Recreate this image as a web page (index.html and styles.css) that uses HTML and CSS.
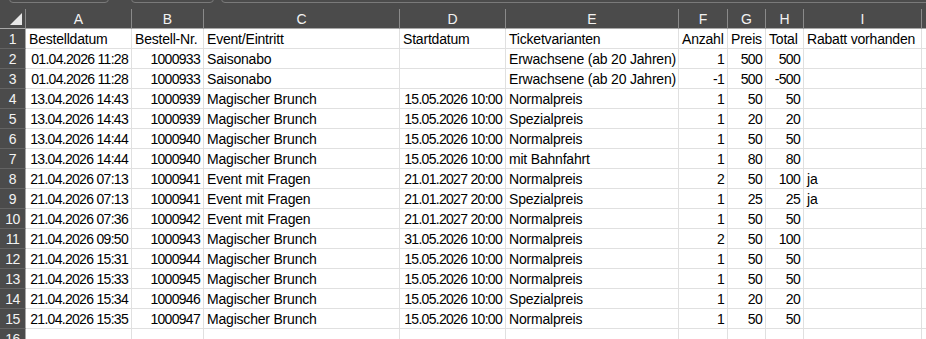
FILE: index.html
```html
<!DOCTYPE html>
<html lang="de">
<head>
<meta charset="utf-8">
<title>Bestellungen</title>
<link rel="stylesheet" href="styles.css">
</head>
<body>
<div class="app">
  <div class="topbar">
    <div class="box b1"></div>
    <div class="box b2"></div>
    <div class="box b3"></div>
  </div>
  <div class="sheet">
    <div class="row head">
      <div class="c corner"><svg width="25" height="19" viewBox="0 0 25 19"><polygon points="22,4 22,16 10,16" fill="#e8e8e8"/></svg></div>
      <div class="c">A</div><div class="c">B</div><div class="c">C</div><div class="c">D</div><div class="c">E</div><div class="c">F</div><div class="c">G</div><div class="c">H</div><div class="c">I</div><div class="c"></div>
    </div>
    <div class="row"><div class="c rh">1</div><div class="c">Bestelldatum</div><div class="c">Bestell-Nr.</div><div class="c">Event/Eintritt</div><div class="c">Startdatum</div><div class="c">Ticketvarianten</div><div class="c">Anzahl</div><div class="c">Preis</div><div class="c">Total</div><div class="c">Rabatt vorhanden</div><div class="c"></div></div>
    <div class="row"><div class="c rh">2</div><div class="c n">01.04.2026 11:28</div><div class="c n">1000933</div><div class="c">Saisonabo</div><div class="c"></div><div class="c">Erwachsene (ab 20 Jahren)</div><div class="c n">1</div><div class="c n">500</div><div class="c n">500</div><div class="c"></div><div class="c"></div></div>
    <div class="row"><div class="c rh">3</div><div class="c n">01.04.2026 11:28</div><div class="c n">1000933</div><div class="c">Saisonabo</div><div class="c"></div><div class="c">Erwachsene (ab 20 Jahren)</div><div class="c n">-1</div><div class="c n">500</div><div class="c n">-500</div><div class="c"></div><div class="c"></div></div>
    <div class="row"><div class="c rh">4</div><div class="c n">13.04.2026 14:43</div><div class="c n">1000939</div><div class="c">Magischer Brunch</div><div class="c n">15.05.2026 10:00</div><div class="c">Normalpreis</div><div class="c n">1</div><div class="c n">50</div><div class="c n">50</div><div class="c"></div><div class="c"></div></div>
    <div class="row"><div class="c rh">5</div><div class="c n">13.04.2026 14:43</div><div class="c n">1000939</div><div class="c">Magischer Brunch</div><div class="c n">15.05.2026 10:00</div><div class="c">Spezialpreis</div><div class="c n">1</div><div class="c n">20</div><div class="c n">20</div><div class="c"></div><div class="c"></div></div>
    <div class="row"><div class="c rh">6</div><div class="c n">13.04.2026 14:44</div><div class="c n">1000940</div><div class="c">Magischer Brunch</div><div class="c n">15.05.2026 10:00</div><div class="c">Normalpreis</div><div class="c n">1</div><div class="c n">50</div><div class="c n">50</div><div class="c"></div><div class="c"></div></div>
    <div class="row"><div class="c rh">7</div><div class="c n">13.04.2026 14:44</div><div class="c n">1000940</div><div class="c">Magischer Brunch</div><div class="c n">15.05.2026 10:00</div><div class="c">mit Bahnfahrt</div><div class="c n">1</div><div class="c n">80</div><div class="c n">80</div><div class="c"></div><div class="c"></div></div>
    <div class="row"><div class="c rh">8</div><div class="c n">21.04.2026 07:13</div><div class="c n">1000941</div><div class="c">Event mit Fragen</div><div class="c n">21.01.2027 20:00</div><div class="c">Normalpreis</div><div class="c n">2</div><div class="c n">50</div><div class="c n">100</div><div class="c">ja</div><div class="c"></div></div>
    <div class="row"><div class="c rh">9</div><div class="c n">21.04.2026 07:13</div><div class="c n">1000941</div><div class="c">Event mit Fragen</div><div class="c n">21.01.2027 20:00</div><div class="c">Spezialpreis</div><div class="c n">1</div><div class="c n">25</div><div class="c n">25</div><div class="c">ja</div><div class="c"></div></div>
    <div class="row"><div class="c rh">10</div><div class="c n">21.04.2026 07:36</div><div class="c n">1000942</div><div class="c">Event mit Fragen</div><div class="c n">21.01.2027 20:00</div><div class="c">Normalpreis</div><div class="c n">1</div><div class="c n">50</div><div class="c n">50</div><div class="c"></div><div class="c"></div></div>
    <div class="row"><div class="c rh">11</div><div class="c n">21.04.2026 09:50</div><div class="c n">1000943</div><div class="c">Magischer Brunch</div><div class="c n">31.05.2026 10:00</div><div class="c">Normalpreis</div><div class="c n">2</div><div class="c n">50</div><div class="c n">100</div><div class="c"></div><div class="c"></div></div>
    <div class="row"><div class="c rh">12</div><div class="c n">21.04.2026 15:31</div><div class="c n">1000944</div><div class="c">Magischer Brunch</div><div class="c n">15.05.2026 10:00</div><div class="c">Normalpreis</div><div class="c n">1</div><div class="c n">50</div><div class="c n">50</div><div class="c"></div><div class="c"></div></div>
    <div class="row"><div class="c rh">13</div><div class="c n">21.04.2026 15:33</div><div class="c n">1000945</div><div class="c">Magischer Brunch</div><div class="c n">15.05.2026 10:00</div><div class="c">Normalpreis</div><div class="c n">1</div><div class="c n">50</div><div class="c n">50</div><div class="c"></div><div class="c"></div></div>
    <div class="row"><div class="c rh">14</div><div class="c n">21.04.2026 15:34</div><div class="c n">1000946</div><div class="c">Magischer Brunch</div><div class="c n">15.05.2026 10:00</div><div class="c">Spezialpreis</div><div class="c n">1</div><div class="c n">20</div><div class="c n">20</div><div class="c"></div><div class="c"></div></div>
    <div class="row"><div class="c rh">15</div><div class="c n">21.04.2026 15:35</div><div class="c n">1000947</div><div class="c">Magischer Brunch</div><div class="c n">15.05.2026 10:00</div><div class="c">Normalpreis</div><div class="c n">1</div><div class="c n">50</div><div class="c n">50</div><div class="c"></div><div class="c"></div></div>
    <div class="row"><div class="c rh">16</div><div class="c"></div><div class="c"></div><div class="c"></div><div class="c"></div><div class="c"></div><div class="c"></div><div class="c"></div><div class="c"></div><div class="c"></div><div class="c"></div></div>
  </div>
</div>
</body>
</html>
```

FILE: styles.css
```css
* { box-sizing: border-box; }

html, body {
  margin: 0;
  padding: 0;
  background: #ffffff;
  overflow: hidden;
}

.app {
  width: 926px;
  height: 339px;
  overflow: hidden;
  font-family: "Liberation Sans", Arial, sans-serif;
  font-size: 14px;
  color: #000000;
}

.topbar {
  height: 9px;
  background: #4b4b4b;
  display: flex;
  align-items: flex-start;
  overflow: hidden;
}

.box {
  height: 9px;
  margin-top: -6px;
  border: 1px solid #7a7a7a;
  border-radius: 4px;
}

.b1 { margin-left: 9px; width: 100px; }
.b2 { margin-left: 22px; width: 83px; }
.b3 { margin-left: 7px; flex: 1; margin-right: -10px; }

.row {
  display: grid;
  grid-template-columns: 26px 106px 72px 196px 106px 173px 49px 38px 38px 118px 1fr;
  height: 20px;
}

.c {
  height: 20px;
  border-right: 1px solid #e0e0e0;
  border-bottom: 1px solid #e0e0e0;
  padding: 0 3px;
  line-height: 20px;
  white-space: nowrap;
  overflow: hidden;
  letter-spacing: -0.2px;
}

.n {
  text-align: right;
  letter-spacing: -0.7px;
  padding-right: 3px;
}

.head .c {
  background: #4b4b4b;
  color: #f2f2f2;
  text-align: center;
  border-right: 1px solid #8a8a8a;
  border-bottom: 1px solid #a8a8a8;
  letter-spacing: 0;
}

.head .corner {
  padding: 0;
  line-height: 0;
}

.rh {
  background: #4b4b4b;
  color: #f2f2f2;
  text-align: center;
  padding: 0;
  border-right: 1px solid #a8a8a8;
  border-bottom: 1px solid #636363;
  letter-spacing: -0.5px;
}
```
